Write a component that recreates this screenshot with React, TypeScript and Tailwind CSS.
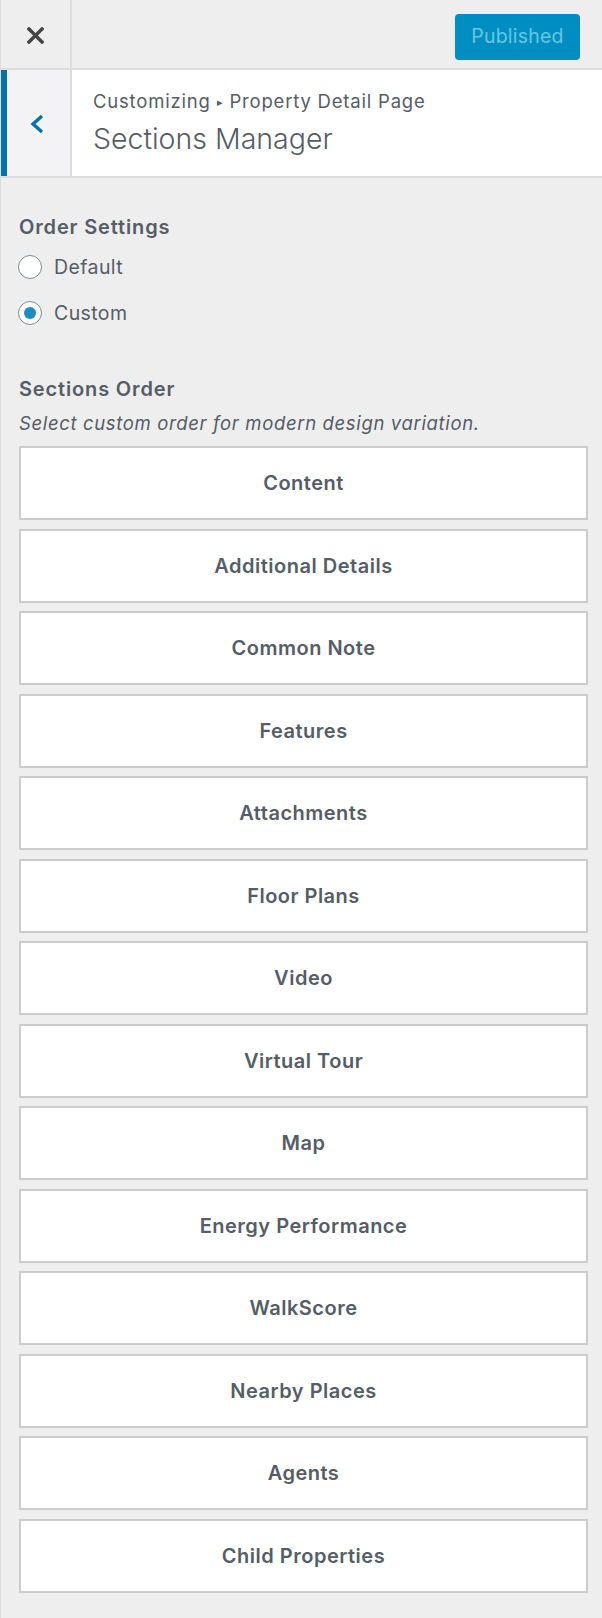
import React from "react";

const sections = [
  "Content",
  "Additional Details",
  "Common Note",
  "Features",
  "Attachments",
  "Floor Plans",
  "Video",
  "Virtual Tour",
  "Map",
  "Energy Performance",
  "WalkScore",
  "Nearby Places",
  "Agents",
  "Child Properties",
];

function Radio({ label, checked }: { label: string; checked?: boolean }) {
  return (
    <label className="flex h-[46px] items-center">
      <span className="-ml-[1px] flex h-[24px] w-[24px] items-center justify-center rounded-full border-[1.5px] border-[#7e8993] bg-white">
        {checked && <span className="h-[12px] w-[12px] rounded-full bg-[#1e8cbe]" />}
      </span>
      <span className="ml-[12px] text-[19.5px] leading-[26px] tracking-[0.4px]">{label}</span>
    </label>
  );
}

export default function App() {
  return (
    <div className="min-h-[1618px] w-[602px] border-l border-[#dddddd] bg-[#eeeeee] font-['Inter','Roboto',sans-serif] text-[#555d66]">
      {/* top bar */}
      <div className="flex h-[70px] border-b-2 border-[#dddddd]">
        <div className="flex w-[71px] items-center justify-center border-r-2 border-[#dddddd] pt-[2px]">
          <svg width="17" height="17" viewBox="0 0 17 17">
            <path d="M2 2 L15 15 M15 2 L2 15" stroke="#444444" strokeWidth="3.4" strokeLinecap="square" />
          </svg>
        </div>
        <div className="flex flex-1 items-start justify-end pr-[22px] pt-[14px]">
          <button className="h-[46px] w-[125px] rounded-[4px] bg-[#008ec2] text-[19.5px] tracking-[0.2px] text-[#66c6e4]">
            Published
          </button>
        </div>
      </div>

      {/* back / title */}
      <div className="flex h-[108px] border-b-2 border-[#dddddd]">
        <div className="flex w-[71px] items-center justify-center border-l-[6px] border-r-2 border-l-[#0073aa] border-r-[#dddddd] bg-[#f3f3f5] pr-[3px] pt-[2px]">
          <svg width="16" height="20" viewBox="0 0 16 20">
            <path d="M13 2 L4 10 L13 18" fill="none" stroke="#0073aa" strokeWidth="3.4" />
          </svg>
        </div>
        <div className="flex flex-1 flex-col bg-white pl-[21px] pt-[18px]">
          <span className="text-[18.5px] leading-[26px] tracking-[0.8px]">
            Customizing <span className="relative -top-[2px] text-[11px]">▸</span> Property Detail Page
          </span>
          <h3 className="mt-[5px] text-[28.5px] font-light leading-[34px]">Sections Manager</h3>
        </div>
      </div>

      {/* controls */}
      <div className="pl-[18px] pr-[14px] pt-[35px] pb-[24px]">
        <div className="text-[20px] font-semibold leading-[28px] tracking-[0.85px]">Order Settings</div>
        <div className="mt-[3px]">
          <Radio label="Default" />
          <Radio label="Custom" checked />
        </div>

        <div className="mt-[39px] text-[20px] font-semibold leading-[28px] tracking-[0.85px]">Sections Order</div>
        <p className="mt-[7px] text-[18.5px] italic leading-[26px] tracking-[0.65px]">
          Select custom order for modern design variation.
        </p>

        <div className="mt-[10px] flex flex-col gap-[8.5px]">
          {sections.map((s) => (
            <div
              key={s}
              className="flex h-[74px] items-center justify-center border-2 border-[#cccccc] bg-white text-[20px] font-semibold tracking-[0.5px]"
            >
              {s}
            </div>
          ))}
        </div>
      </div>
    </div>
  );
}
